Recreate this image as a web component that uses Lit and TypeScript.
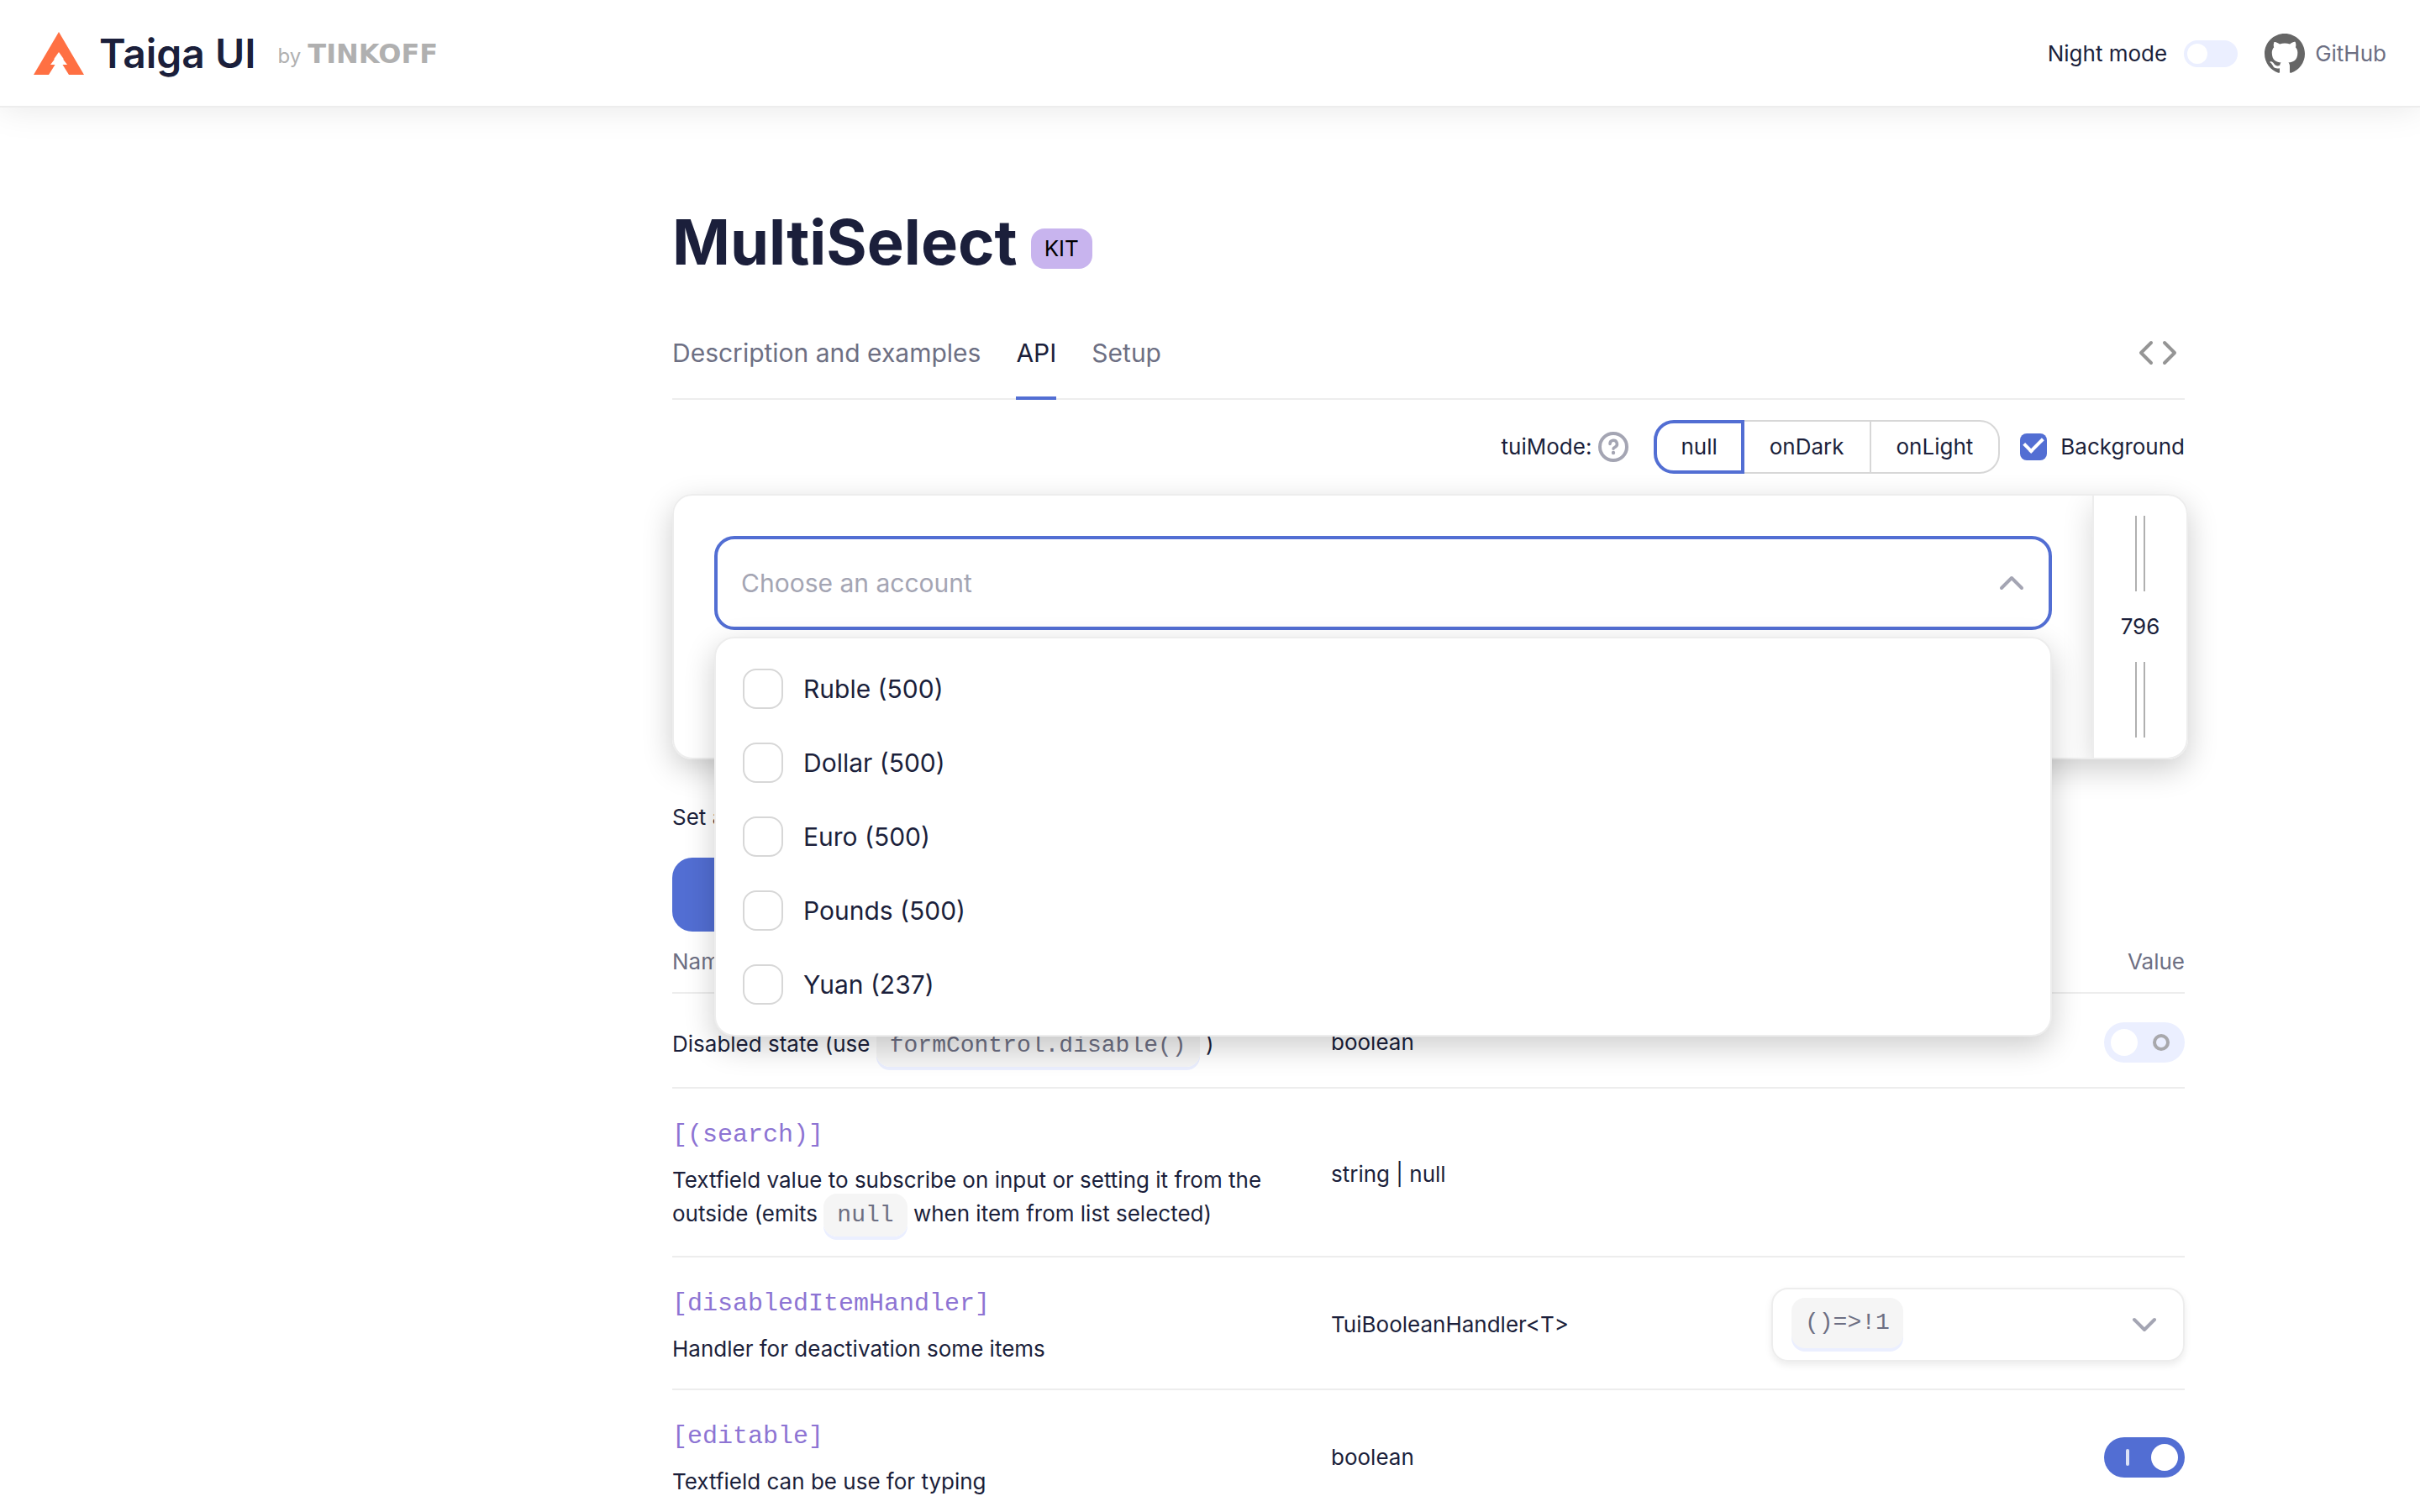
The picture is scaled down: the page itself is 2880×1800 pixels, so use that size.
import { LitElement, html, css } from "lit";
import { customElement, property, state } from "lit/decorators.js";

const base = css`
  *,
  *::before,
  *::after {
    box-sizing: border-box;
  }
  svg {
    display: block;
    flex: none;
  }
`;

/** Sliding on/off switch, in a small plain form and a large form with state marks. */
@customElement("tui-toggle")
class TuiToggle extends LitElement {
  @property({ type: Boolean }) checked = false;
  @property({ type: Boolean }) large = false;
  @property() name = "";

  static styles = [
    base,
    css`
      :host {
        display: block;
        flex: none;
      }
      .toggle {
        appearance: none;
        display: flex;
        align-items: center;
        justify-content: space-between;
        width: 64px;
        height: 32px;
        margin: 0;
        padding: 4px;
        border-radius: 24px;
        background: #ebefff;
      }
      .toggle::before {
        content: "";
        width: 24px;
        height: 24px;
        border-radius: 50%;
        background: #fff;
      }
      .large {
        width: 96px;
        height: 48px;
        padding: 8px;
      }
      .large::before {
        width: 32px;
        height: 32px;
      }
      .large::after {
        content: "";
        width: 20px;
        height: 20px;
        margin: 0 10px;
        border: 4px solid #a8a8ac;
        border-radius: 50%;
      }
      .large:checked {
        flex-direction: row-reverse;
        background: #526ed3;
      }
      .large:checked::after {
        width: 4px;
        margin: 0 18px;
        border: 0;
        border-radius: 2px;
        background: #dce2f6;
      }
    `,
  ];

  render() {
    return html`<input
      class="toggle ${this.large ? "large" : ""}"
      type="checkbox"
      role="switch"
      aria-label=${this.name}
      .checked=${this.checked}
    />`;
  }
}

@customElement("doc-header")
class DocHeader extends LitElement {
  static styles = [
    base,
    css`
      .header {
        display: flex;
        align-items: center;
        justify-content: space-between;
        height: 128px;
        padding: 2px 40px 0;
        border-bottom: 2px solid #ededed;
        background: #fff;
        box-shadow: 0 0 40px rgba(0, 0, 0, 0.1);
      }
      .brand,
      .tools,
      .github {
        display: flex;
        align-items: center;
      }
      .brand {
        gap: 18px;
        color: #1b1f3b;
        text-decoration: none;
      }
      .name {
        font-size: 48px;
        line-height: 64px;
        font-weight: 600;
      }
      .by {
        display: flex;
        align-items: baseline;
        gap: 8px;
        padding: 2px 0 0 8px;
        color: #b0b0b0;
        font-size: 24px;
      }
      .company {
        font-family: "DejaVu Sans", sans-serif;
        font-size: 32px;
        font-weight: 700;
      }
      .tools {
        gap: 20px;
        color: #1b1f3b;
      }
      .github {
        gap: 12px;
        padding-left: 12px;
        color: #6d6f83;
        text-decoration: none;
      }
    `,
  ];

  render() {
    return html`<header class="header">
      <a class="brand" href="#">
        <svg width="60" height="52" viewBox="0 0 60 52" fill="#ff7043">
          <path d="M30 0 60 51H42L34.500 39H40L35 32.500H36L30 24 24 32.500H25L20 39H25.500L18 51H0Z" />
        </svg>
        <span class="name">Taiga UI</span>
        <span class="by">by <span class="company">TINKOFF</span></span>
      </a>
      <div class="tools">
        <span>Night mode</span>
        <tui-toggle name="Night mode"></tui-toggle>
        <a class="github" href="#">
          <svg width="48" height="48" viewBox="0 0 16 16" fill="#666">
            <path
              d="M8 0C3.58 0 0 3.58 0 8c0 3.54 2.29 6.53 5.47 7.59.4.07.55-.17.55-.38 0-.19-.01-.82-.01-1.49-2.01.37-2.53-.49-2.69-.94-.09-.23-.48-.94-.82-1.13-.28-.15-.68-.52-.01-.53.63-.01 1.08.58 1.23.82.72 1.21 1.87.87 2.33.66.07-.52.28-.87.51-1.07-1.78-.2-3.64-.89-3.64-3.95 0-.87.31-1.59.82-2.15-.08-.2-.36-1.02.08-2.12 0 0 .67-.21 2.2.82.64-.18 1.32-.27 2-.27.68 0 1.36.09 2 .27 1.53-1.04 2.2-.82 2.2-.82.44 1.1.16 1.92.08 2.12.51.56.82 1.27.82 2.15 0 3.07-1.87 3.75-3.65 3.95.29.25.54.73.54 1.48 0 1.07-.01 1.93-.01 2.2 0 .21.15.46.55.38A8.013 8.013 0 0016 8c0-4.42-3.58-8-8-8z"
            />
          </svg>
          GitHub
        </a>
      </div>
    </header>`;
  }
}

/** Text field with its open list of accounts. */
@customElement("multi-select")
class MultiSelect extends LitElement {
  @state() items = ["Ruble (500)", "Dollar (500)", "Euro (500)", "Pounds (500)", "Yuan (237)"];

  static styles = [
    base,
    css`
      :host {
        display: block;
        position: relative;
        font-size: 30px;
      }
      .field {
        display: flex;
        align-items: center;
        height: 112px;
        padding: 0 24px 0 28px;
        border: 4px solid #526ed3;
        border-radius: 24px;
        background: #fff;
      }
      .input {
        flex: 1;
        min-width: 0;
        padding: 0;
        border: 0;
        outline: 0;
        background: none;
        color: #1b1f3b;
        font: inherit;
      }
      .input::placeholder {
        color: #a4a5b3;
        opacity: 1;
      }
      .list {
        position: absolute;
        z-index: 1;
        top: 120px;
        left: 0;
        right: 0;
        margin: 0;
        padding: 16px 32px;
        border: 2px solid #ededed;
        border-radius: 24px;
        background: #fff;
        box-shadow: 0 12px 36px rgba(0, 0, 0, 0.2);
        list-style: none;
      }
      .option {
        display: flex;
        align-items: center;
        gap: 24px;
        height: 88px;
      }
      .box {
        appearance: none;
        width: 48px;
        height: 48px;
        margin: 0;
        border: 2px solid #d7d7d7;
        border-radius: 16px;
      }
    `,
  ];

  render() {
    return html`<div class="field">
        <input class="input" type="text" aria-label="Choose an account" placeholder="Choose an account" />
        <svg width="40" height="32" viewBox="0 0 40 32" fill="none" stroke="#a4a5b3" stroke-width="4" stroke-linecap="round" stroke-linejoin="round">
          <path d="M8 22 20 10 32 22" />
        </svg>
      </div>
      <ul class="list">
        ${this.items.map(
          (item) => html`<li>
            <label class="option"><input class="box" type="checkbox" />${item}</label>
          </li>`
        )}
      </ul>`;
  }
}

@customElement("app-root")
class AppRoot extends LitElement {
  @state() mode = "null";

  static styles = [
    base,
    css`
      :host {
        display: block;
        height: 100vh;
        overflow: hidden;
        background: #fff;
        color: #1b1f3b;
        font-family: Inter, "Liberation Sans", sans-serif;
        font-size: 26px;
        line-height: 40px;
      }
      .page {
        padding: 112px 280px 0 800px;
      }
      .heading {
        display: flex;
        align-items: center;
        gap: 16px;
        height: 96px;
      }
      .title {
        margin: 0;
        font-size: 74px;
        line-height: 96px;
        font-weight: 700;
      }
      .badge {
        margin-top: 16px;
        padding: 4px 16px;
        border-radius: 16px;
        background: #c8b4ee;
        color: #000;
      }
      .tabs {
        display: flex;
        align-items: stretch;
        gap: 42px;
        height: 112px;
        margin-top: 28px;
        border-bottom: 2px solid #ededed;
        font-size: 30px;
      }
      .tab {
        display: flex;
        align-items: center;
        margin-bottom: -2px;
        padding-top: 4px;
        border-bottom: 4px solid transparent;
        color: #6d6f83;
        text-decoration: none;
      }
      .current {
        border-color: #526ed3;
        color: #1b1f3b;
      }
      .source {
        align-self: center;
        margin-left: auto;
        padding: 2px 0 0;
        border: 0;
        background: none;
      }
      .settings {
        display: flex;
        align-items: center;
        justify-content: flex-end;
        gap: 24px;
        height: 112px;
      }
      .modes {
        display: flex;
        align-items: center;
        margin: 0;
        padding: 0;
        border: 0;
      }
      .mode-name {
        display: flex;
        align-items: center;
        gap: 8px;
        margin-right: 32px;
      }
      .mode {
        display: flex;
        align-items: center;
        height: 64px;
        margin-left: -2px;
        padding: 0 30px;
        border: 2px solid #d7d7d7;
      }
      .mode input {
        appearance: none;
        margin: 0;
      }
      .mode:first-of-type {
        border-radius: 24px 0 0 24px;
      }
      .mode:last-of-type {
        border-radius: 0 24px 24px 0;
      }
      .mode:has(:checked) {
        z-index: 1;
        padding: 0 28px;
        border: 4px solid #526ed3;
      }
      .background {
        display: flex;
        align-items: center;
        gap: 16px;
      }
      .tick {
        appearance: none;
        display: grid;
        width: 32px;
        height: 32px;
        margin: 0;
        border-radius: 8px;
        background: #526ed3;
      }
      .tick::after {
        content: "";
        width: 22px;
        height: 14px;
        margin: 4px 0 0 5px;
        border: solid #fff;
        border-width: 0 0 4px 4px;
        rotate: -45deg;
      }
      .demo {
        display: flex;
        height: 316px;
        margin-right: -4px;
        border: 2px solid #ededed;
        border-radius: 24px;
        box-shadow: 0 12px 36px rgba(0, 0, 0, 0.2);
      }
      .stage {
        flex: 1;
        padding: 48px;
      }
      .sizer {
        display: flex;
        flex-direction: column;
        align-items: center;
        justify-content: space-between;
        width: 112px;
        padding: 24px 0;
        border-left: 2px solid #ededed;
        border-radius: 0 22px 22px 0;
        box-shadow: 0 12px 36px rgba(0, 0, 0, 0.16);
        clip-path: inset(0 0 0 -48px round 0 22px 22px 0);
      }
      .grip {
        width: 12px;
        height: 90px;
        border: solid #b0b0b0;
        border-width: 0 2px;
      }
      .note {
        margin: 0;
        padding: 49px 0 28px;
      }
      .set {
        display: block;
        width: 240px;
        height: 88px;
        border: 0;
        border-radius: 24px;
        background: #526ed3;
      }
      .props {
        width: 100%;
        border-collapse: collapse;
        table-layout: fixed;
      }
      .props th {
        height: 73px;
        padding: 0;
        border-bottom: 2px solid #ededed;
        color: #6d6f83;
        font-weight: 400;
        text-align: left;
      }
      .props .value {
        width: 492px;
        text-align: right;
      }
      .props .prop {
        width: 784px;
      }
      .props td {
        height: 113px;
        padding: 31px 0 27px;
        border-bottom: 2px solid #ededed;
      }
      .key {
        display: block;
        margin-bottom: 10px;
        color: #8d74d3;
        font: 30px / 48px "Liberation Mono", monospace;
      }
      .text {
        margin: 0;
        padding-right: 40px;
      }
      .key + .text:has(.code) {
        padding-bottom: 3px;
      }
      .text:first-child {
        padding-top: 4px;
      }
      .code,
      .chip {
        padding: 10px 16px;
        border: 0;
        border-radius: 16px;
        background: #f5f5f5;
        box-shadow: 0 4px #ebefff;
        color: #6d6f83;
        font: 28px / 32px "Liberation Mono", monospace;
      }
      .chip {
        appearance: none;
        height: 60px;
        margin-bottom: 4px;
      }
      .select {
        display: flex;
        align-items: center;
        justify-content: space-between;
        height: 88px;
        padding: 0 26px 0 22px;
        border: 2px solid #ededed;
        border-radius: 20px;
        box-shadow: 0 4px 8px rgba(0, 0, 0, 0.08);
      }
      .control {
        display: flex;
        justify-content: flex-end;
      }
    `,
  ];

  row(key: string, text: unknown, type: string, control: unknown) {
    return html`<tr>
      <td>${key ? html`<code class="key">${key}</code>` : ""}<p class="text">${text}</p></td>
      <td>${type}</td>
      <td>${control}</td>
    </tr>`;
  }

  toggle(name: string, checked: boolean) {
    return html`<div class="control"><tui-toggle large name=${name} ?checked=${checked}></tui-toggle></div>`;
  }

  render() {
    return html`<doc-header></doc-header>
      <main class="page">
        <div class="heading">
          <h1 class="title">MultiSelect</h1>
          <span class="badge">KIT</span>
        </div>
        <nav class="tabs">
          <a class="tab" href="#">Description and examples</a>
          <a class="tab current" href="#">API</a>
          <a class="tab" href="#">Setup</a>
          <button class="source" aria-label="Source code">
            <svg width="64" height="48" viewBox="0 0 64 48" fill="none" stroke="#959595" stroke-width="4" stroke-linecap="round" stroke-linejoin="round">
              <path d="M24 12 12 24 24 36M40 12 52 24 40 36" />
            </svg>
          </button>
        </nav>
        <div class="settings">
          <fieldset class="modes" aria-label="tuiMode">
            <span class="mode-name">
              tuiMode:
              <svg width="36" height="36" viewBox="0 0 36 36" fill="none" stroke="#a4a5b3" stroke-width="4" stroke-linecap="round">
                <circle cx="18" cy="18" r="16" />
                <path d="M14 14.500a4.200 4.200 0 1 1 6 3.800c-1.500.7-2 1.200-2 2" stroke-width="3.500" />
                <circle cx="18" cy="25" r="2.200" fill="#a4a5b3" stroke="none" />
              </svg>
            </span>
            ${["null", "onDark", "onLight"].map(
              (mode) => html`<label class="mode">
                <input
                  type="radio"
                  name="mode"
                  .checked=${mode === this.mode}
                  @change=${() => (this.mode = mode)}
                />${mode}
              </label>`
            )}
          </fieldset>
          <label class="background"><input class="tick" type="checkbox" checked />Background</label>
        </div>
        <section class="demo">
          <div class="stage"><multi-select></multi-select></div>
          <div class="sizer">
            <span class="grip"></span>
            <output>796</output>
            <span class="grip"></span>
          </div>
        </section>
        <p class="note">Set a</p>
        <button class="set" aria-label="Set"></button>
        <table class="props">
          <thead>
            <tr>
              <th class="prop">Name</th>
              <th></th>
              <th class="value">Value</th>
            </tr>
          </thead>
          <tbody>
            ${this.row(
              "",
              html`Disabled state (use <code class="code">formControl.disable()</code> )`,
              "boolean",
              this.toggle("Disabled", false)
            )}
            ${this.row(
              "[(search)]",
              html`Textfield value to subscribe on input or setting it from the outside (emits
                <code class="code">null</code> when item from list selected)`,
              "string | null",
              ""
            )}
            ${this.row(
              "[disabledItemHandler]",
              "Handler for deactivation some items",
              "TuiBooleanHandler<T>",
              html`<div class="select">
                <select class="chip" aria-label="disabledItemHandler">
                  <option>()=&gt;!1</option>
                </select>
                <svg width="40" height="32" viewBox="0 0 40 32" fill="none" stroke="#a4a5b3" stroke-width="4" stroke-linecap="round" stroke-linejoin="round">
                  <path d="M8 10 20 22 32 10" />
                </svg>
              </div>`
            )}
            ${this.row("[editable]", "Textfield can be use for typing", "boolean", this.toggle("Editable", true))}
          </tbody>
        </table>
      </main>`;
  }
}
